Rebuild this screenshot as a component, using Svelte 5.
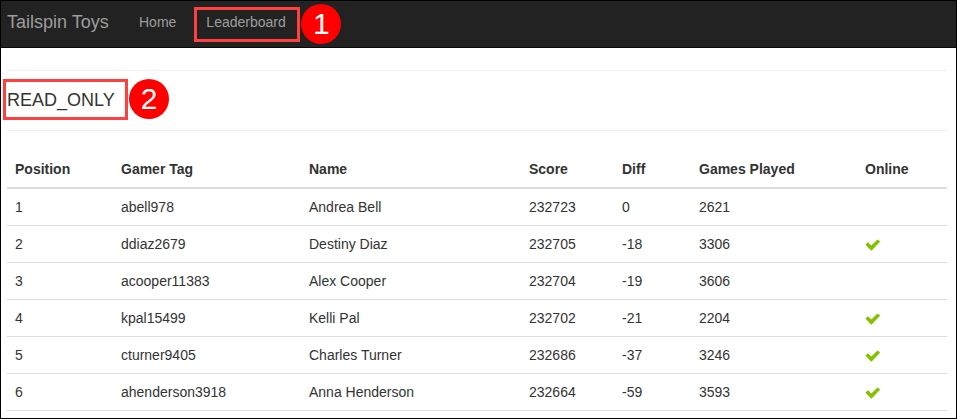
<script>
  const columns = [
    { label: 'Position', width: 106 },
    { label: 'Gamer Tag', width: 188 },
    { label: 'Name', width: 220 },
    { label: 'Score', width: 93 },
    { label: 'Diff', width: 77 },
    { label: 'Games Played', width: 166 },
    { label: 'Online', width: 90 }
  ];

  const players = [
    { tag: 'abell978', name: 'Andrea Bell', score: 232723, diff: 0, games: 2621, online: false },
    { tag: 'ddiaz2679', name: 'Destiny Diaz', score: 232705, diff: -18, games: 3306, online: true },
    { tag: 'acooper11383', name: 'Alex Cooper', score: 232704, diff: -19, games: 3606, online: false },
    { tag: 'kpal15499', name: 'Kelli Pal', score: 232702, diff: -21, games: 2204, online: true },
    { tag: 'cturner9405', name: 'Charles Turner', score: 232686, diff: -37, games: 3246, online: true },
    { tag: 'ahenderson3918', name: 'Anna Henderson', score: 232664, diff: -59, games: 3593, online: true }
  ];
</script>

<div class="page">
  <nav>
    <a class="brand" href="#home">Tailspin Toys</a>
    <a class="link" href="#home">Home</a>
    <a class="link boxed" href="#leaderboard">
      Leaderboard
      <span class="box nav-box"></span>
      <span class="badge nav-badge">1</span>
    </a>
  </nav>

  <main>
    <header>
      <h4>
        READ_ONLY
        <span class="box title-box"></span>
        <span class="badge title-badge">2</span>
      </h4>
    </header>

    <table>
      <colgroup>
        {#each columns as column}
          <col style="width: {column.width}px" />
        {/each}
      </colgroup>
      <thead>
        <tr>
          {#each columns as column}
            <th>{column.label}</th>
          {/each}
        </tr>
      </thead>
      <tbody>
        {#each players as player, i}
          <tr>
            <td>{i + 1}</td>
            <td>{player.tag}</td>
            <td>{player.name}</td>
            <td>{player.score}</td>
            <td>{player.diff}</td>
            <td>{player.games}</td>
            <td>
              {#if player.online}
                <svg class="check" width="16" height="12" viewBox="0 0 16 12" role="img" aria-label="Online">
                  <path d="M0.8 6.1 Q0.4 5.7 0.8 5.3 L2.5 3.6 Q2.9 3.2 3.3 3.6 L6.3 6.5 L12.2 0.7 Q12.6 0.3 13 0.7 L14.8 2.3 Q15.2 2.7 14.8 3.1 L6.7 11.4 Q6.3 11.8 5.9 11.4 Z" />
                </svg>
              {/if}
            </td>
          </tr>
        {/each}
      </tbody>
    </table>
  </main>
</div>

<style>
  :global(body) {
    margin: 0;
    overflow: hidden;
  }

  .page {
    box-sizing: border-box;
    width: 957px;
    height: 419px;
    overflow: hidden;
    border: 1px solid #000;
    background: #fff;
    color: #333;
    font: 14px/20px 'Liberation Sans', Arial, sans-serif;
  }

  nav {
    display: flex;
    height: 46px;
    padding-left: 6px;
    border-bottom: 1px solid #080808;
    background: #222;
  }

  nav a {
    color: #9d9d9d;
    text-decoration: none;
    white-space: nowrap;
  }

  .brand {
    width: 132px;
    padding-top: 11px;
    font-size: 18px;
  }

  .link {
    padding-top: 11px;
    margin-right: 30px;
  }

  .boxed,
  h4 {
    position: relative;
  }

  .box {
    position: absolute;
    box-sizing: border-box;
    border: 3px solid #ff4040;
  }

  .badge {
    position: absolute;
    width: 40px;
    height: 40px;
    border-radius: 50%;
    background: #f00;
    color: #fff;
    font-size: 30px;
    line-height: 39px;
    text-align: center;
  }

  .nav-box {
    left: -12px;
    top: 6px;
    width: 106px;
    height: 35px;
  }

  .nav-badge {
    left: 95px;
    top: 3px;
  }

  main {
    padding: 22px 9px 0 6px;
  }

  header {
    padding: 19px 0;
    border-top: 1px solid #eee;
    border-bottom: 1px solid #eee;
  }

  h4 {
    margin: 0;
    height: 21px;
    font-size: 18px;
    font-weight: 400;
    line-height: 20px;
  }

  .title-box {
    left: -4px;
    top: -11px;
    width: 125px;
    height: 41px;
  }

  .title-badge {
    left: 122px;
    top: -11px;
  }

  table {
    width: 940px;
    margin-top: 20px;
    border-spacing: 0;
    table-layout: fixed;
  }

  th,
  td {
    box-sizing: border-box;
    height: 37px;
    padding: 8px;
    border-bottom: 1px solid #ddd;
    text-align: left;
    vertical-align: top;
    white-space: nowrap;
  }

  th {
    height: 38px;
    border-bottom-width: 2px;
  }

  .check {
    display: block;
    margin-top: 5px;
    fill: #82c300;
  }
</style>
